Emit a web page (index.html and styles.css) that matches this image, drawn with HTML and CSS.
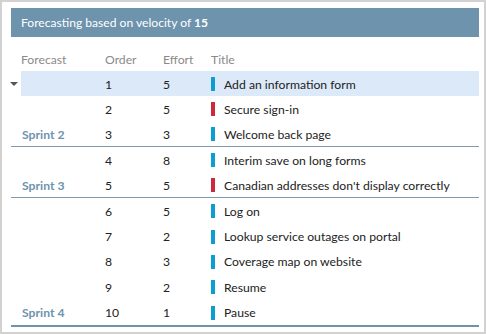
FILE: index.html
```html
<!DOCTYPE html>
<html lang="en">
<head>
  <meta charset="UTF-8">
  <title>Forecast</title>
  <link rel="stylesheet" href="styles.css">
</head>
<body>
  <div class="frame">
    <div class="banner">Forecasting based on velocity of <b>15</b></div>

    <div class="grid head">
      <span></span>
      <span>Forecast</span>
      <span>Order</span>
      <span>Effort</span>
      <span>Title</span>
    </div>

    <!-- Sprint 2 -->
    <div class="grid row selected">
      <span class="caret"></span>
      <span></span><span>1</span><span>5</span>
      <span class="title"><i class="bar blue"></i>Add an information form</span>
    </div>
    <div class="grid row">
      <span></span>
      <span></span><span>2</span><span>5</span>
      <span class="title"><i class="bar red"></i>Secure sign-in</span>
    </div>
    <div class="grid row sprint-end">
      <span></span>
      <span class="sprint">Sprint 2</span><span>3</span><span>3</span>
      <span class="title"><i class="bar blue"></i>Welcome back page</span>
    </div>

    <!-- Sprint 3 -->
    <div class="grid row">
      <span></span>
      <span></span><span>4</span><span>8</span>
      <span class="title"><i class="bar blue"></i>Interim save on long forms</span>
    </div>
    <div class="grid row sprint-end">
      <span></span>
      <span class="sprint">Sprint 3</span><span>5</span><span>5</span>
      <span class="title"><i class="bar red"></i>Canadian addresses don't display correctly</span>
    </div>

    <!-- Sprint 4 -->
    <div class="grid row tall">
      <span></span>
      <span></span><span>6</span><span>5</span>
      <span class="title"><i class="bar blue"></i>Log on</span>
    </div>
    <div class="grid row tall">
      <span></span>
      <span></span><span>7</span><span>2</span>
      <span class="title"><i class="bar blue"></i>Lookup service outages on portal</span>
    </div>
    <div class="grid row tall">
      <span></span>
      <span></span><span>8</span><span>3</span>
      <span class="title"><i class="bar blue"></i>Coverage map on website</span>
    </div>
    <div class="grid row tall">
      <span></span>
      <span></span><span>9</span><span>2</span>
      <span class="title"><i class="bar blue"></i>Resume</span>
    </div>
    <div class="grid row tall last">
      <span></span>
      <span class="sprint">Sprint 4</span><span>10</span><span>1</span>
      <span class="title"><i class="bar blue"></i>Pause</span>
    </div>
  </div>
</body>
</html>
```

FILE: styles.css
```css
/* General Styles */
body {
  margin: 0;
  font-family: 'Segoe UI', Lato, sans-serif;
  font-size: 12.2px;
  color: #222;
  background-color: #fff;
}

.frame {
  box-sizing: border-box;
  width: 486px;
  height: 334px;
  border: 2px solid #d2d2d2;
  padding: 6px 5px 0 9px;
  overflow: hidden;
}

/* Velocity banner */
.banner {
  height: 29px;
  line-height: 29px;
  padding-left: 10px;
  background-color: #6d93ad;
  color: #fff;
  font-size: 12.1px;
}

.banner b {
  font-weight: 700;
}

/* Grid rows */
.grid {
  display: grid;
  grid-template-columns: 10px 84px 58px 48px 1fr;
  align-items: center;
}

.head {
  height: 34px;
  padding-top: 10px;
  box-sizing: border-box;
  color: #8a8a8a;
}

.row {
  height: 25px;
}

.row.tall {
  height: 25.4px;
}

.row > span:not(.caret) {
  padding-top: 1px;
}

.row.selected > span:not(.caret) {
  background-color: #dce9f9;
  height: 100%;
  box-sizing: border-box;
  display: flex;
  align-items: center;
}

.sprint-end {
  border-bottom: 1px solid #7f9bb1;
}

.last {
  border-bottom: 2px solid #6d93ad;
}

.sprint {
  color: #6d93ad;
  font-weight: 700;
  padding-left: 1px;
}

.caret {
  width: 0;
  height: 0;
  margin-left: -1px;
  border-left: 4px solid transparent;
  border-right: 4px solid transparent;
  border-top: 4px solid #555;
}

/* Title with work item colour bar */
.title {
  display: flex;
  align-items: center;
  gap: 9px;
  white-space: nowrap;
}

.bar {
  display: block;
  width: 4px;
  height: 14px;
  flex: none;
}

.bar.blue {
  background-color: #0d9ed1;
}

.bar.red {
  background-color: #cc293d;
}
```
